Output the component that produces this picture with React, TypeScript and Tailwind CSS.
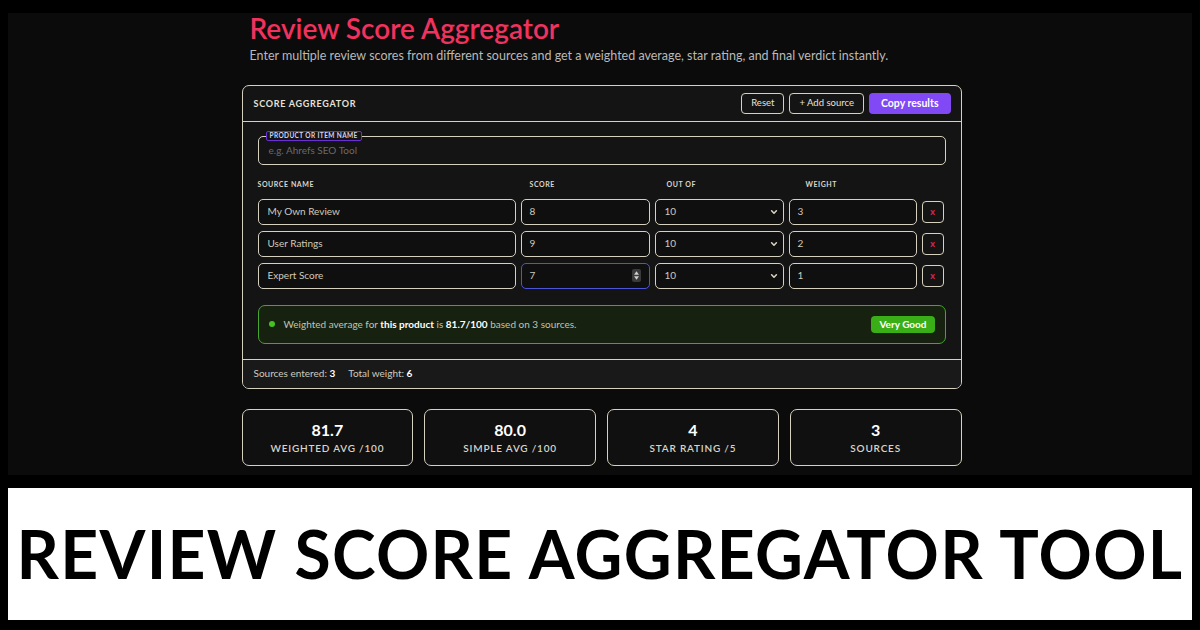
import React from 'react'

const font = { fontFamily: 'Lato, "Open Sans", sans-serif' }

const rows = [
  { name: 'My Own Review', score: '8', outOf: '10', weight: '3' },
  { name: 'User Ratings', score: '9', outOf: '10', weight: '2' },
  { name: 'Expert Score', score: '7', outOf: '10', weight: '1', focus: true },
]

const stats = [
  { value: '81.7', label: 'WEIGHTED AVG /100' },
  { value: '80.0', label: 'SIMPLE AVG /100' },
  { value: '4', label: 'STAR RATING /5' },
  { value: '3', label: 'SOURCES' },
]

function Chevron() {
  return (
    <svg width="8" height="8" viewBox="0 0 10 10" fill="none" stroke="#d6d0bf" strokeWidth="2" strokeLinecap="round" strokeLinejoin="round">
      <path d="M2 3.5l3 3 3-3" />
    </svg>
  )
}

function Spinner() {
  return (
    <div className="w-[9px] h-[13px] rounded-[2px] bg-[#3a3a3a] flex flex-col items-center justify-center gap-[1px]">
      <svg width="5" height="4" viewBox="0 0 6 4"><path d="M0 4L3 0L6 4Z" fill="#cfcfcf" /></svg>
      <svg width="5" height="4" viewBox="0 0 6 4"><path d="M0 0L3 4L6 0Z" fill="#cfcfcf" /></svg>
    </div>
  )
}

export default function App() {
  return (
    <div style={font} className="w-[1200px] h-[630px] bg-black pt-[13px] px-[8px] flex flex-col">
      <div className="h-[462px] bg-[#0b0b0b] flex justify-center">
        <div className="w-[720px] flex flex-col ml-[3px]">
          <h1 className="text-[#f0325f] text-[28px] font-semibold leading-[30px] ml-2">Review Score Aggregator</h1>
          <p className="text-[#b9b9b9] text-[12.5px] ml-2 mt-[5px] leading-[16px]">
            Enter multiple review scores from different sources and get a weighted average, star rating, and final verdict instantly.
          </p>

          <div className="mt-[21px] border-[1.5px] border-[#d6d0bf] rounded-[7px] bg-[#141414] overflow-hidden">
            <div className="h-[36px] flex items-center justify-between pl-[11px] pr-[10px] border-b-[1.5px] border-[#d6d0bf]">
              <span className="text-[9px] font-bold tracking-[0.08em] text-[#e6e2d8]">SCORE AGGREGATOR</span>
              <div className="flex items-center gap-[5px]">
                <div className="h-[21px] px-[9px] flex items-center border-[1.5px] border-[#d6d0bf] rounded-[4px] text-[9.5px] text-[#e6e2d8]">Reset</div>
                <div className="h-[21px] px-[9px] flex items-center border-[1.5px] border-[#d6d0bf] rounded-[4px] text-[9.5px] text-[#e6e2d8]">+ Add source</div>
                <div className="h-[21px] px-[12px] flex items-center rounded-[4px] bg-[#8049f5] text-[10.5px] font-bold text-white">Copy results</div>
              </div>
            </div>

            <div className="px-[15px] pt-[14px] pb-[15px]">
              <div className="relative h-[29px] border-[1.5px] border-[#d6d0bf] rounded-[5px] flex items-center px-[10px]">
                <span className="text-[10px] text-[#6a6a6a]">e.g. Ahrefs SEO Tool</span>
                <span className="absolute left-[7px] top-[-6px] h-[10px] px-[3px] flex items-center border border-[#6b2fd6] bg-[#141414] rounded-[2px] text-[6.5px] font-bold tracking-[0.06em] text-[#d8d2f0]">PRODUCT OR ITEM NAME</span>
              </div>

              <div className="grid grid-cols-[258px_129px_129px_128px_22px] gap-x-[5px] mt-[14px] text-[7px] font-bold tracking-[0.08em] text-[#d9d5cc]">
                <span>SOURCE NAME</span>
                <span className="pl-[9px]">SCORE</span>
                <span className="pl-[12px]">OUT OF</span>
                <span className="pl-[17px]">WEIGHT</span>
                <span />
              </div>

              <div className="flex flex-col gap-[6px] mt-[9px]">
                {rows.map((r) => (
                  <div key={r.name} className="grid grid-cols-[258px_129px_129px_128px_22px] gap-x-[5px] items-center text-[10px] text-[#cfcabd]">
                    <div className="h-[26px] border-[1.5px] border-[#d6d0bf] rounded-[5px] flex items-center px-[9px] bg-[#0f0f0f]">{r.name}</div>
                    <div className={`h-[26px] border-[1.5px] rounded-[5px] flex items-center justify-between px-[8px] bg-[#0f0f0f] ${r.focus ? 'border-[#4c55d8]' : 'border-[#d6d0bf]'}`}>
                      <span>{r.score}</span>
                      {r.focus && <Spinner />}
                    </div>
                    <div className="h-[26px] border-[1.5px] border-[#d6d0bf] rounded-[5px] flex items-center justify-between pl-[9px] pr-[5px] bg-[#0f0f0f]">
                      <span>{r.outOf}</span>
                      <Chevron />
                    </div>
                    <div className="h-[26px] border-[1.5px] border-[#d6d0bf] rounded-[5px] flex items-center px-[8px] bg-[#0f0f0f]">{r.weight}</div>
                    <div className="h-[22px] w-[22px] border-[1.5px] border-[#d6d0bf] rounded-[4px] flex items-center justify-center text-[9px] font-bold text-[#e0264f]">x</div>
                  </div>
                ))}
              </div>

              <div className="mt-[16px] h-[39px] border-[1.5px] border-[#47a42e] rounded-[7px] bg-[#16220f] flex items-center justify-between pl-[10px] pr-[10px]">
                <div className="flex items-center gap-[9px] text-[10px] text-[#bfc4b6]">
                  <span className="w-[6px] h-[6px] rounded-full bg-[#45c21f]" />
                  <span>
                    Weighted average for <b className="text-white">this product</b> is <b className="text-white">81.7/100</b> based on 3 sources.
                  </span>
                </div>
                <div className="h-[17px] px-[8px] rounded-[4px] bg-[#3aae16] flex items-center text-[10px] font-bold text-white">Very Good</div>
              </div>
            </div>

            <div className="h-[29px] border-t-[1.5px] border-[#d6d0bf] bg-[#191919] flex items-center gap-[13px] px-[11px] text-[10px] text-[#cfcabd]">
              <span>Sources entered: <b className="text-white">3</b></span>
              <span>Total weight: <b className="text-white">6</b></span>
            </div>
          </div>

          <div className="grid grid-cols-4 gap-[11px] mt-[20px]">
            {stats.map((s) => (
              <div key={s.label} className="h-[57px] border-[1.5px] border-[#d6d0bf] rounded-[7px] bg-[#101010] flex flex-col items-center justify-center">
                <span className="text-[16px] font-bold text-white leading-[20px]">{s.value}</span>
                <span className="text-[10px] font-semibold tracking-[0.08em] text-[#d8d4ca] leading-[14px] mt-[1px]">{s.label}</span>
              </div>
            ))}
          </div>
        </div>
      </div>

      <div className="mt-[13px] h-[132px] bg-white flex items-center justify-center">
        <span className="text-[66px] font-bold text-black tracking-[0.02em] leading-none">REVIEW SCORE AGGREGATOR TOOL</span>
      </div>
    </div>
  )
}
